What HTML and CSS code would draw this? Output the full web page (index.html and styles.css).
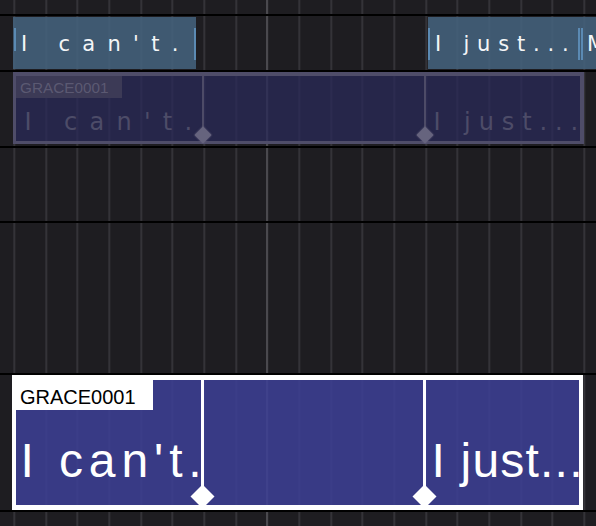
FILE: index.html
```html
<!DOCTYPE html>
<html lang="en">
<head>
<meta charset="utf-8">
<title>Timeline</title>
<link rel="stylesheet" href="styles.css">
</head>
<body>
<div class="timeline">
  <div class="ruler"></div>

  <div class="track track-sub">
    <div class="sub-clip clip-a">
      <span class="mark mark-l mark-short"></span>
      <span class="sub-text">I can't.</span>
      <span class="mark mark-r"></span>
    </div>
    <div class="sub-clip clip-b">
      <span class="mark mark-l"></span>
      <span class="sub-text">I just...</span>
      <span class="mark mark-r"></span>
    </div>
    <div class="sub-clip clip-c">
      <span class="mark mark-l"></span>
      <span class="sub-text">M</span>
    </div>
  </div>

  <div class="track track-ghost">
    <div class="event ghost">
      <div class="seg seg-1"><span class="ev-text">I can't.</span></div>
      <div class="seg seg-2"><span class="knot"></span></div>
      <div class="seg seg-3"><span class="knot"></span><span class="ev-text">I just...</span></div>
      <div class="ev-label">GRACE0001</div>
    </div>
  </div>

  <div class="track track-empty"></div>
  <div class="track track-tall"></div>

  <div class="track track-event">
    <div class="event main">
      <div class="seg seg-1"><span class="ev-text">I can't.</span></div>
      <div class="seg seg-2"><span class="knot"></span></div>
      <div class="seg seg-3"><span class="knot"></span><span class="ev-text">I just...</span></div>
      <div class="ev-label">GRACE0001</div>
    </div>
  </div>
</div>
</body>
</html>
```

FILE: styles.css
```css
html, body {
  margin: 0;
  padding: 0;
  background: #1e1d21;
}

.timeline {
  position: relative;
  width: 596px;
  height: 526px;
  overflow: hidden;
  display: flex;
  flex-direction: column;
  background-color: #1e1d21;
  background-image:
    linear-gradient(90deg, #4a494e, #4a494e),
    repeating-linear-gradient(90deg, #343338 0 2px, transparent 2px 31.667px);
  background-size: 2px 100%, auto;
  background-position: 266px 0, 13.3px 0;
  background-repeat: no-repeat, repeat;
}

.ruler {
  flex: none;
  height: 14px;
  border-bottom: 2px solid #000;
}

.track {
  flex: none;
  position: relative;
  border-bottom: 2px solid #000;
}

.track-sub { height: 54px; }
.track-ghost { height: 74px; }
.track-empty { height: 73px; }
.track-tall { height: 150px; }
.track-event { height: 135px; }

/* ---- subtitle clips (top track) ---- */
.sub-clip {
  position: absolute;
  top: 1px;
  height: 52px;
  box-sizing: border-box;
  display: flex;
  align-items: flex-start;
  padding-top: 15px;
  background: rgba(68, 98, 124, 0.88);
  color: #f3f5f7;
  font-family: "DejaVu Sans", sans-serif;
  font-size: 21px;
  line-height: 25px;
  white-space: nowrap;
  overflow: hidden;
}

.clip-a { left: 13px; width: 183px; padding-left: 8px; letter-spacing: 12.3px; }
.clip-b { left: 428px; width: 153px; padding-left: 7px; letter-spacing: 7.8px; }
.clip-c { left: 581px; width: 40px; padding-left: 6px; }

.mark {
  position: absolute;
  top: 11px;
  width: 2px;
  height: 32px;
  background: #5b8ab3;
}
.mark-l { left: 1px; }
.mark-r { right: 0; }
.clip-b .mark-l, .clip-c .mark-l { left: 0; }
.clip-b .mark-r { right: 1px; }
.mark-short { height: 23px; }

/* ---- events (shared) ---- */
.event {
  position: absolute;
  top: 0;
  box-sizing: border-box;
  display: flex;
}

.seg {
  position: relative;
  flex: none;
  box-sizing: border-box;
  display: flex;
  align-items: flex-end;
  white-space: nowrap;
}
.seg-3 { flex: 1 1 0; min-width: 0; }

.ev-label {
  position: absolute;
  box-sizing: border-box;
  font-family: "Liberation Sans", Arial, sans-serif;
  white-space: nowrap;
}

.knot {
  position: absolute;
  transform: rotate(45deg);
}

/* ---- ghost preview event ---- */
.ghost {
  left: 13px;
  width: 571px;
  height: 72px;
  border-style: solid;
  border-color: #4f4d69;
  border-width: 4px 4px 3px 3px;
  background: rgba(42, 42, 88, 0.75);
}
.ghost .seg { padding-bottom: 5px; }
.ghost .seg-1 { width: 186px; padding-left: 8.6px; }
.ghost .seg-2 { width: 222px; border-left: 2px solid #4d4b67; }
.ghost .seg-3 { border-left: 2px solid #4d4b67; padding-left: 7.6px; }
.ghost .ev-text {
  font-family: "DejaVu Sans", sans-serif;
  font-size: 24px;
  line-height: 28px;
  color: #4d4c68;
}
.ghost .seg-1 .ev-text { letter-spacing: 12.3px; }
.ghost .seg-3 .ev-text { letter-spacing: 7.9px; }
.ghost .knot {
  left: -7px;
  top: 53px;
  width: 12px;
  height: 12px;
  background: #66647e;
  box-shadow: 0 0 2px #66647e;
}
.ghost .ev-label {
  top: 0;
  left: 0;
  width: 106px;
  height: 22px;
  padding: 2px 0 0 4px;
  background: #3c3a56;
  color: #5b5972;
  font-size: 15.3px;
  line-height: 20px;
}

/* ---- main event ---- */
.main {
  left: 12px;
  width: 571px;
  height: 135px;
  border: 4px solid #fff;
  border-top-width: 5px;
  border-bottom-width: 5px;
  background: rgba(61, 64, 151, 0.85);
}
.main .seg { padding-bottom: 20px; }
.main .seg-1 { width: 185px; padding-left: 4.5px; }
.main .seg-2 { width: 222px; border-left: 3px solid #fff; }
.main .seg-3 { border-left: 3px solid #fff; padding-left: 5.5px; }
.main .ev-text {
  font-family: "Liberation Sans", Arial, sans-serif;
  font-size: 48px;
  line-height: 48px;
  color: #fff;
}
.main .seg-1 .ev-text { letter-spacing: 5.9px; }
.main .seg-3 .ev-text { letter-spacing: 1.2px; }
.main .knot {
  left: -10px;
  top: 107.5px;
  width: 17px;
  height: 17px;
  background: #fff;
}
.main .ev-label {
  top: -5px;
  left: -4px;
  width: 141px;
  height: 35px;
  padding: 9px 0 0 8px;
  background: #fff;
  color: #000;
  font-size: 20px;
  line-height: 26px;
}
```
